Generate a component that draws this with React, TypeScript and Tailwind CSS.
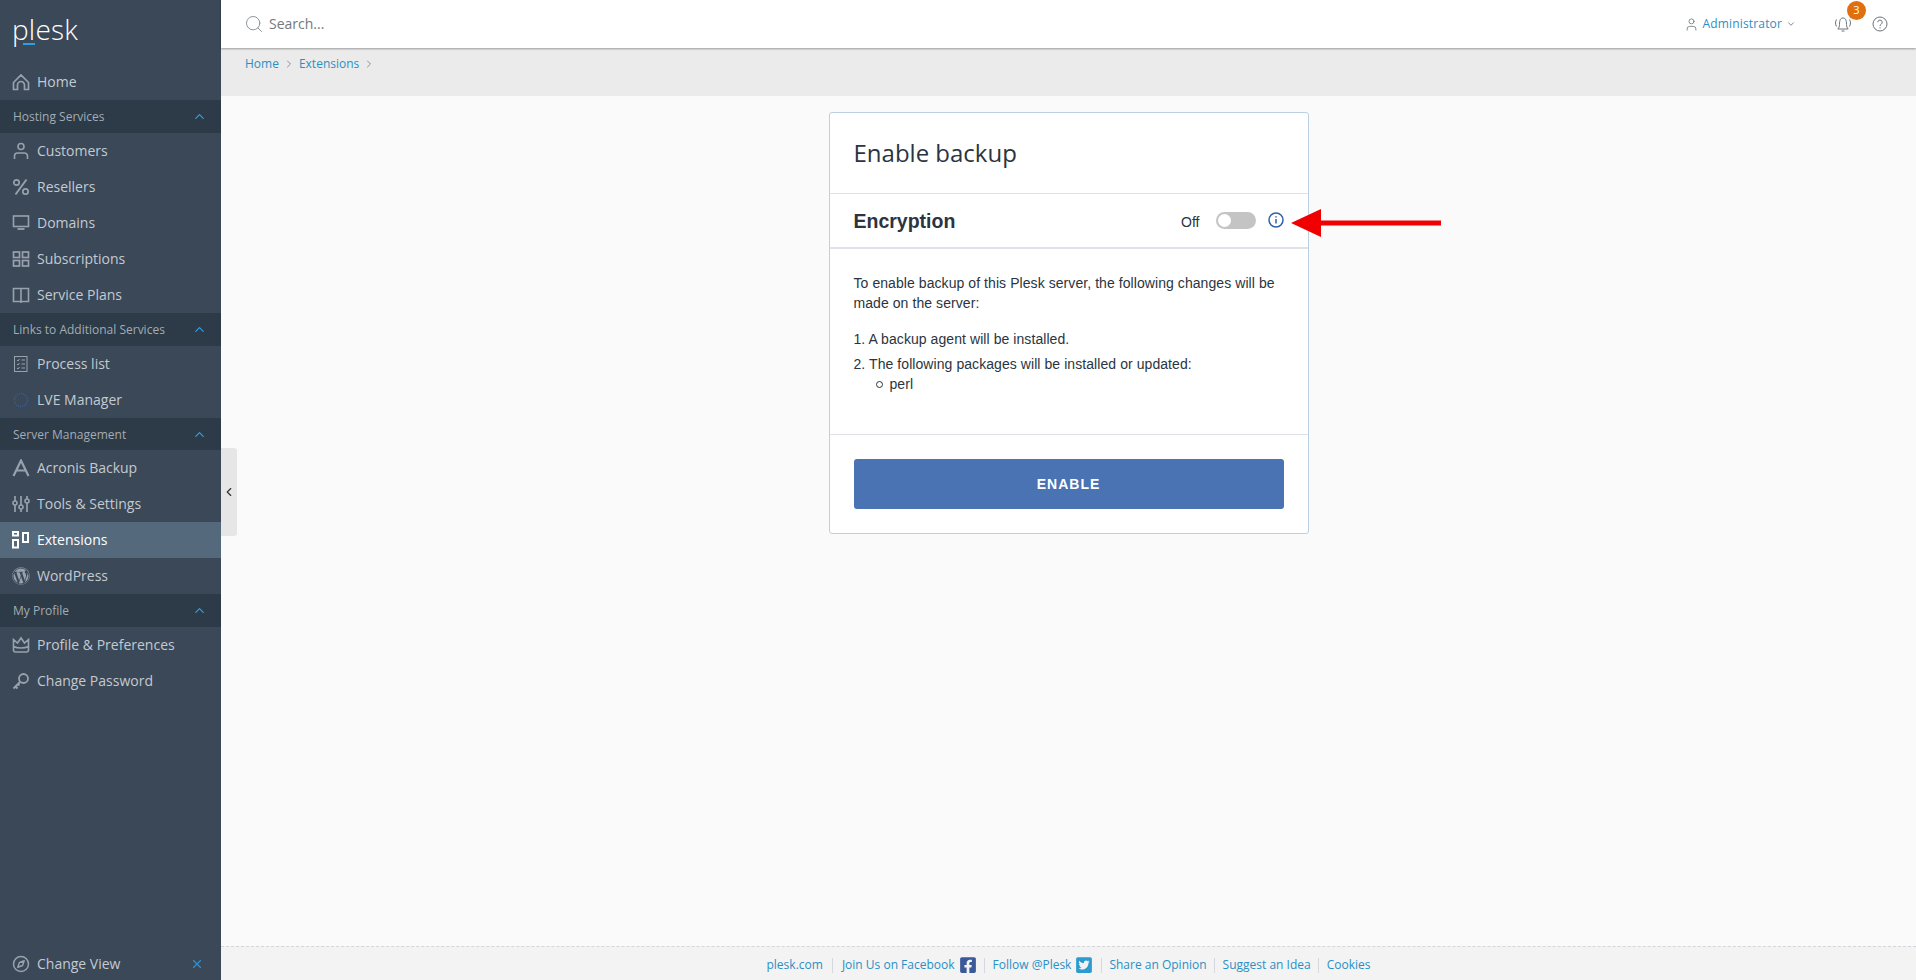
import { FaFacebookSquare, FaTwitterSquare, FaWordpress } from "react-icons/fa";
import { ChevronLeft, ChevronRight, ChevronDown, ChevronUp, Compass, Search, User, X } from "lucide-react";
import type { ReactNode } from "react";

const sans = "font-['Open_Sans',sans-serif]";

function Icon({ children }: { children: ReactNode }) {
  return (
    <svg width="18" height="18" viewBox="0 0 18 18" fill="none" stroke="#98a2ac" strokeWidth="1.4" className="shrink-0">
      {children}
    </svg>
  );
}

const icons: Record<string, ReactNode> = {
  home: (
    <Icon>
      <path d="M1.500 9.500 9 2l7.500 7.500v7h-4V12a3.500 3.500 0 0 0-7 0v4.500h-4z" strokeWidth="1.700" />
    </Icon>
  ),
  customers: (
    <Icon>
      <circle cx="9" cy="4.500" r="3" strokeWidth="1.600" />
      <path d="M2.500 17v-3a3 3 0 0 1 3-3h7a3 3 0 0 1 3 3v3" strokeWidth="1.600" />
    </Icon>
  ),
  resellers: (
    <Icon>
      <circle cx="4.500" cy="4.500" r="2.700" strokeWidth="1.700" />
      <circle cx="13.500" cy="13.500" r="2.700" strokeWidth="1.700" />
      <path d="M14.500 1.500 3.500 16.500" strokeWidth="1.900" />
    </Icon>
  ),
  domains: (
    <Icon>
      <rect x="1.500" y="2" width="15" height="10.500" strokeWidth="1.600" />
      <path d="M5.500 15h7" strokeWidth="1.800" />
    </Icon>
  ),
  subscriptions: (
    <Icon>
      <rect x="1.500" y="2" width="6" height="5.500" strokeWidth="1.700" />
      <rect x="10.500" y="2" width="6" height="5.500" strokeWidth="1.700" />
      <rect x="1.500" y="10.500" width="6" height="5.500" strokeWidth="1.700" />
      <rect x="10.500" y="10.500" width="6" height="5.500" strokeWidth="1.700" />
    </Icon>
  ),
  plans: (
    <Icon>
      <path d="M1.500 2.500h15v13h-15zM9 2.500v14.500" strokeWidth="1.600" />
    </Icon>
  ),
  process: (
    <svg width="18" height="18" viewBox="0 0 18 18" fill="none" stroke="#98a2ac" strokeWidth="1" className="shrink-0">
      <rect x="2.500" y="1.500" width="12.500" height="15" />
      <path d="M5 5l1 1 1.500-2M5 9l1 1 1.500-2M5 13l1 1 1.500-2M9.500 5h3.500M9.500 9h3.500M9.500 13h3.500" />
    </svg>
  ),
  lve: (
    <svg width="18" height="18" viewBox="0 0 18 18" fill="none" className="shrink-0">
      <circle cx="9" cy="9" r="6.500" stroke="#3c5a94" strokeWidth="1.800" strokeDasharray="1 1" />
    </svg>
  ),
  acronis: (
    <svg width="18" height="18" viewBox="0 0 18 18" fill="none" stroke="#98a2ac" strokeWidth="2.200" className="shrink-0">
      <path d="M1.500 17 9 1.500 16.500 17M4 11.500h10" />
    </svg>
  ),
  tools: (
    <Icon>
      <path d="M3 1v5M3 10v7M9 1v9M9 14v3M15 1v3M15 8v9" strokeWidth="1.700" />
      <circle cx="3" cy="8" r="2" strokeWidth="1.600" />
      <circle cx="9" cy="12" r="2" strokeWidth="1.600" />
      <circle cx="15" cy="6" r="2" strokeWidth="1.600" />
    </Icon>
  ),
  extensions: (
    <svg width="18" height="18" viewBox="0 0 18 18" fill="none" stroke="#ffffff" strokeWidth="2" className="shrink-0">
      <rect x="1" y="1" width="5" height="3.500" />
      <rect x="1" y="9" width="5" height="7.500" />
      <rect x="11" y="2" width="5" height="9" />
    </svg>
  ),
  crown: (
    <Icon>
      <path d="M1.500 3.500 5.500 7 9 2l3.500 5 4-3.500V14a2 2 0 0 1-2 2h-11a2 2 0 0 1-2-2zM1.500 10.500c4 2 11 2 15 0" strokeWidth="1.600" />
    </Icon>
  ),
  key: (
    <Icon>
      <circle cx="11.500" cy="6.500" r="4.500" strokeWidth="1.800" />
      <path d="M8.300 9.700 1.500 16.500M3.500 14.500l2 2M6 12l1.500 1.500" strokeWidth="2" />
    </Icon>
  ),
};

const menu: { group?: string; short?: boolean; label?: string; icon?: string; active?: boolean; wp?: boolean }[] = [
  { label: "Home", icon: "home" },
  { group: "Hosting Services" },
  { label: "Customers", icon: "customers" },
  { label: "Resellers", icon: "resellers" },
  { label: "Domains", icon: "domains" },
  { label: "Subscriptions", icon: "subscriptions" },
  { label: "Service Plans", icon: "plans" },
  { group: "Links to Additional Services" },
  { label: "Process list", icon: "process" },
  { label: "LVE Manager", icon: "lve" },
  { group: "Server Management", short: true },
  { label: "Acronis Backup", icon: "acronis" },
  { label: "Tools & Settings", icon: "tools" },
  { label: "Extensions", icon: "extensions", active: true },
  { label: "WordPress", wp: true },
  { group: "My Profile" },
  { label: "Profile & Preferences", icon: "crown" },
  { label: "Change Password", icon: "key" },
];

function Sidebar() {
  return (
    <aside className={`w-[221px] shrink-0 bg-[#3a4858] flex flex-col ${sans}`}>
      <div className="h-16 pl-[12px] pt-[11px] shrink-0">
        <div className="relative w-fit text-[28px] leading-[36px] font-light text-white tracking-[0.2px]">
          plesk
          <span className="absolute left-[11px] top-[32px] w-[12px] h-[2px] bg-[#2f9fe0]" />
        </div>
      </div>
      {menu.map((m) =>
        m.group ? (
          <div
            key={m.group}
            className={`${m.short ? "h-8 pt-px" : "h-[33px]"} bg-[#2d3a47] flex items-center justify-between pl-[13px] pr-[14px] text-xs text-[#a3acb5]`}
          >
            <span>{m.group}</span>
            <ChevronUp size={15} color="#2f9fe0" />
          </div>
        ) : (
          <div
            key={m.label}
            className={`h-9 flex items-center gap-[7px] pl-[12px] text-sm ${m.active ? "bg-[#55697c] text-white" : "text-[#c4cad0]"}`}
          >
            {m.wp ? <FaWordpress size={18} color="#98a2ac" className="shrink-0" /> : icons[m.icon!]}
            <span>{m.label}</span>
          </div>
        )
      )}
      <div className="mt-auto h-[32px] flex items-center gap-[7px] pl-[12px] pr-[17px] text-sm text-[#c4cad0]">
        <Compass size={18} color="#98a2ac" className="shrink-0" />
        <span>Change View</span>
        <X size={14} color="#2f8fd0" className="ml-auto" />
      </div>
    </aside>
  );
}

function Topbar() {
  return (
    <header className={`h-12 shrink-0 bg-white flex items-center pl-[23px] pr-[28px] shadow-[0_1px_2px_rgba(0,0,0,0.35)] relative z-10 ${sans}`}>
      <Search size={20} color="#8d9499" strokeWidth={1.2} />
      <span className="ml-[5px] text-sm text-[#74797e]">Search...</span>
      <div className="ml-auto flex items-center">
        <User size={15} color="#6b7277" strokeWidth={1.3} />
        <span className="ml-[4px] text-xs text-[#2a8fc4] tracking-[0.15px]">Administrator</span>
        <ChevronDown size={10} color="#6b7277" className="ml-[4px]" />
        <div className="relative ml-[38px]">
          <svg width="18" height="16" viewBox="0 0 18 16" fill="none" stroke="#6b7277" strokeWidth="1" className="block">
            <path d="M5.500 8.500C5.500 4 6.500 2 9 2s3.500 2 3.500 6.500c0 2 .7 3.500 1.700 4.500H3.800c1-1 1.700-2.500 1.700-4.500zM7.500 15h3M2.500 3.500c-1.300 2-1.300 5 0 7M15.500 3.500c1.300 2 1.300 5 0 7" />
          </svg>
          <span className="absolute -top-[15px] left-[13px] w-[19px] h-[19px] rounded-full bg-[#e0700f] text-white text-[11px] flex items-center justify-center">3</span>
        </div>
        <svg width="16" height="16" viewBox="0 0 16 16" fill="none" stroke="#6b7277" strokeWidth="1" className="ml-[20px]">
          <circle cx="8" cy="8" r="7" />
          <path d="M5.800 6.200a2.200 2.200 0 1 1 3.400 1.900c-.8.500-1.200 1-1.200 1.900M8 11.300v1.200" />
        </svg>
      </div>
    </header>
  );
}

function Breadcrumbs() {
  return (
    <div className={`h-12 shrink-0 bg-[#ebebeb] pl-6 pt-[9px] flex items-start text-xs leading-[14px] text-[#2a8fc4] ${sans}`}>
      <span>Home</span>
      <ChevronRight size={12} color="#8d9499" className="mx-[4px] mt-[1px]" />
      <span>Extensions</span>
      <ChevronRight size={12} color="#8d9499" className="ml-[4px] mt-[1px]" />
    </div>
  );
}

function Card() {
  return (
    <section className="w-[480px] h-[422px] mt-4 mx-auto bg-white border border-[#bcd0e4] rounded-[3px] text-[#2b3440] font-['Liberation_Sans',sans-serif] flex flex-col">
      <div className="h-[81px] shrink-0 px-6 flex items-center border-b border-[#dfe3e8]">
        <h1 className={`text-2xl font-normal ${sans}`}>Enable backup</h1>
      </div>
      <div className="h-[55px] shrink-0 px-6 flex items-center border-b-2 border-[#dfe3e8]">
        <h2 className="text-[19.5px] font-bold mt-[2px]">Encryption</h2>
        <span className="ml-auto text-sm mt-[3px]">Off</span>
        <span className="ml-[16px] w-10 h-[17px] rounded-full bg-[#c4c4c4] p-[2px] flex items-center">
          <span className="w-[13px] h-[13px] rounded-full bg-white" />
        </span>
        <svg width="16" height="16" viewBox="0 0 16 16" fill="none" stroke="#2f5fa8" strokeWidth="1.500" className="ml-3 -mt-[2px]">
          <circle cx="8" cy="8" r="7" />
          <path d="M8 7v4.500M8 4.200v1.300" />
        </svg>
      </div>
      <div className="h-[186px] shrink-0 px-6 pt-[24px] border-b border-[#dfe3e8] text-sm leading-5 tracking-[0.07px]">
        <p className="mb-[16px]">To enable backup of this Plesk server, the following changes will be made on the server:</p>
        <ol>
          <li className="mb-[5px]">1. A backup agent will be installed.</li>
          <li>
            2. The following packages will be installed or updated:
            <div className="flex items-center pl-[22px] gap-[7px]">
              <span className="w-[7px] h-[7px] rounded-full border border-[#2b3440]" />
              <span>perl</span>
            </div>
          </li>
        </ol>
      </div>
      <div className="flex-1 px-6 pt-6">
        <button className="w-full h-[50px] rounded-[3px] bg-[#4a73b3] text-white text-sm font-bold tracking-[1px]">ENABLE</button>
      </div>
    </section>
  );
}

function Sep({ wide }: { wide?: boolean }) {
  return <span className={`w-px h-[15px] bg-[#d5d8dc] ${wide ? "mx-[9px]" : "mx-[7.5px]"}`} />;
}

function Footer() {
  return (
    <footer className={`h-[34px] shrink-0 bg-[#f3f3f3] border-t border-dashed border-[#d5d5dc] pt-[3px] flex items-center justify-center text-xs text-[#2a8fc4] ${sans}`}>
      <span>plesk.com</span>
      <Sep wide />
      <span>Join Us on Facebook</span>
      <FaFacebookSquare size={18} color="#3b5998" className="ml-[4px]" />
      <Sep />
      <span>Follow @Plesk</span>
      <FaTwitterSquare size={18} color="#2b9bd0" className="ml-[4px]" />
      <Sep />
      <span>Share an Opinion</span>
      <Sep />
      <span>Suggest an Idea</span>
      <Sep />
      <span>Cookies</span>
    </footer>
  );
}

export default function App() {
  return (
    <div className="relative h-[980px] flex overflow-hidden bg-[#fafafa]">
      <Sidebar />
      <main className="flex-1 flex flex-col min-w-0">
        <Topbar />
        <Breadcrumbs />
        <div className="flex-1">
          <Card />
        </div>
        <Footer />
      </main>
      {/* sidebar collapse handle */}
      <div className="absolute left-[221px] top-[448px] w-4 h-[88px] bg-[#e6e6e6] rounded-r-[3px] flex items-center justify-center">
        <ChevronLeft size={14} color="#333" />
      </div>
      {/* annotation arrow */}
      <svg width="150" height="30" viewBox="0 0 150 30" className="absolute left-[1291px] top-[208px]">
        <path d="M0 15 30 1v11.500h120v5H30V29z" fill="#f00000" />
      </svg>
    </div>
  );
}
